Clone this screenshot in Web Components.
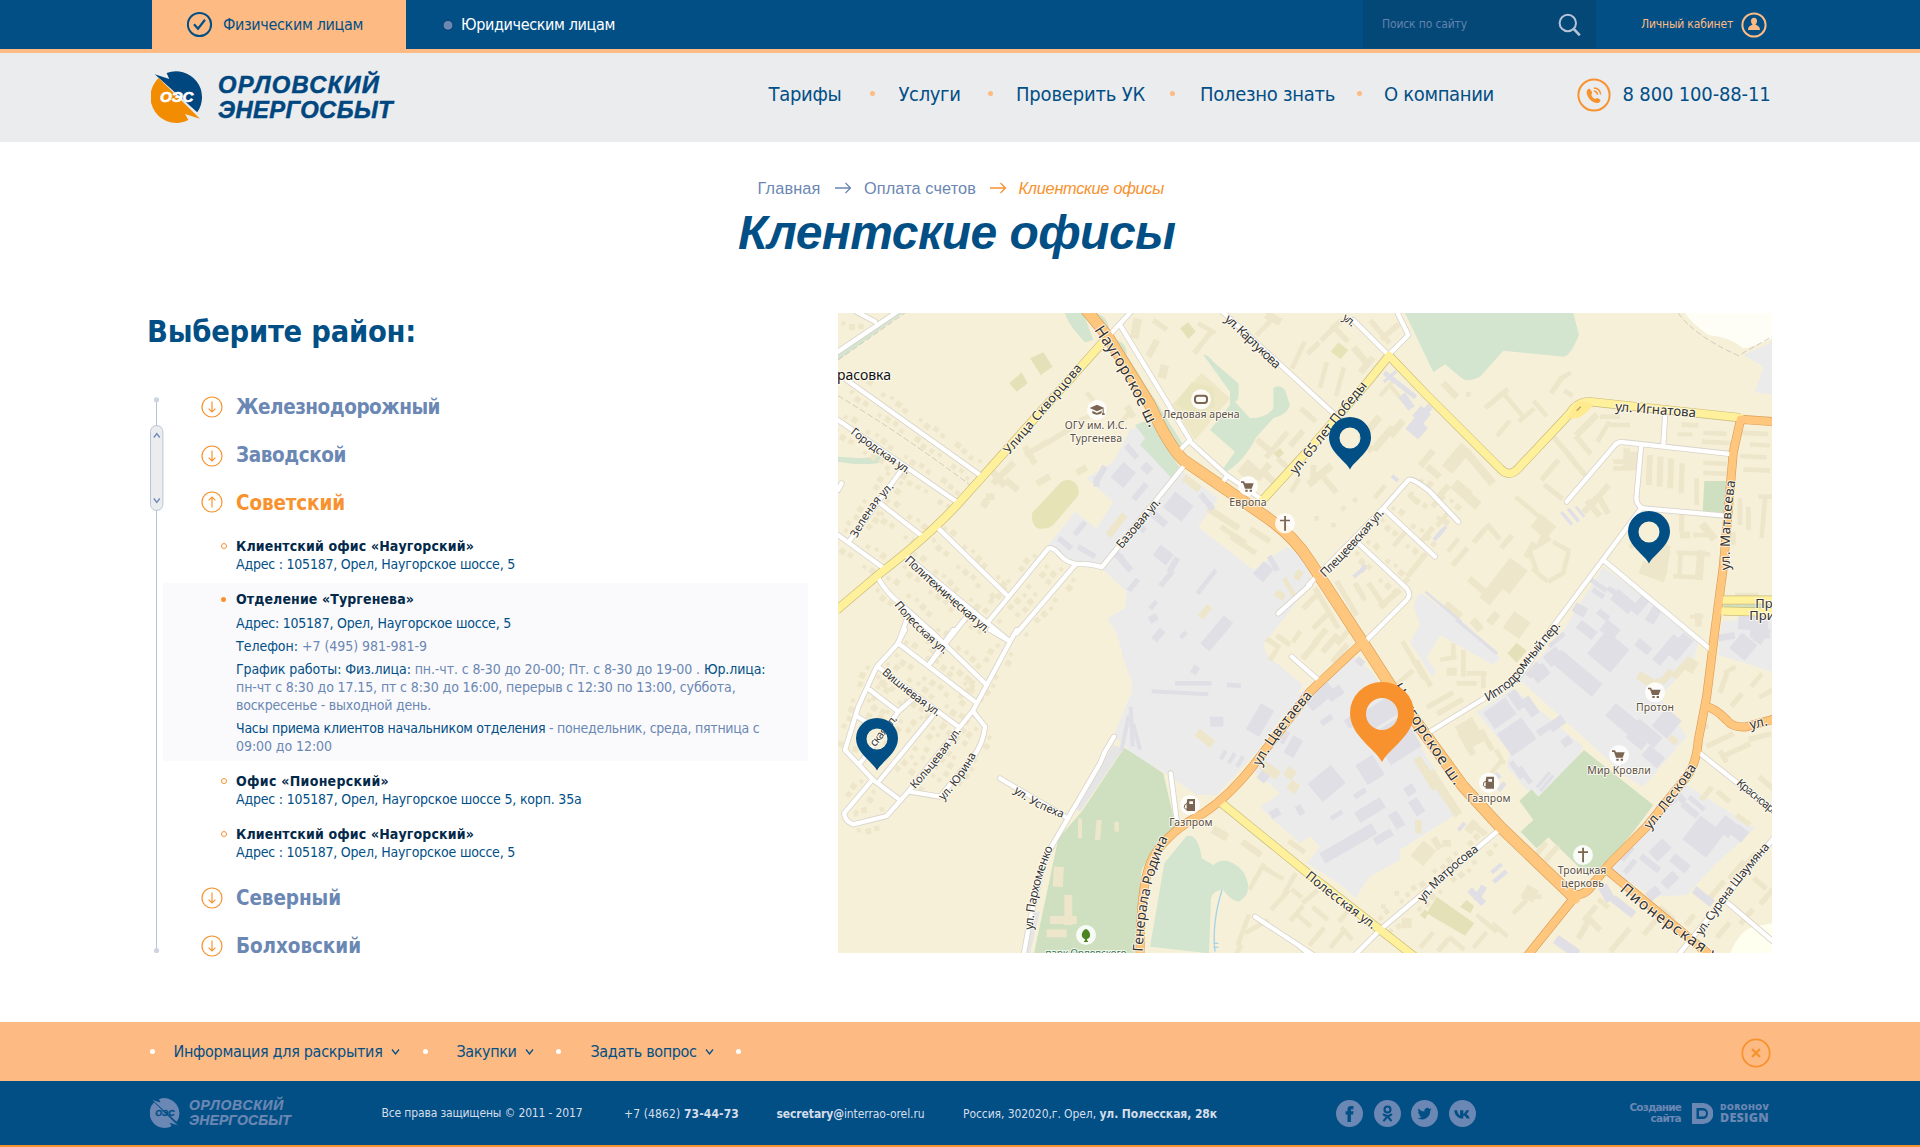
<!DOCTYPE html>
<html lang="ru">
<head>
<meta charset="utf-8">
<title>Клиентские офисы — Орловский Энергосбыт</title>
<style>
html,body{margin:0;padding:0;background:#fff}
body{font-family:"DejaVu Sans Condensed","DejaVu Sans","Noto Sans",sans-serif;font-stretch:condensed;color:#024f86}
</style>
</head>
<body>
<oes-page></oes-page>
<script>
const define=(name,html,setup)=>customElements.define(name,class extends HTMLElement{
  constructor(){super();this.attachShadow({mode:'open'});}
  connectedCallback(){
    this.shadowRoot.innerHTML=typeof html==='function'?html(this):html;
    if(setup)setup(this);
  }
});

/* Text whose tracking is adjusted so that it spans the width given in "w". */
define('fit-text',`<style>:host{display:inline-block;white-space:pre;flex:none}</style><span><slot></slot></span>`,el=>{
  const w=+el.getAttribute('w'),s=el.shadowRoot.querySelector('span');
  const n=el.textContent.length;
  el.style.width=w+'px';
  s.style.letterSpacing=((w-s.getBoundingClientRect().width)/n).toFixed(3)+'px';
});

define('oes-logo',el=>{
  const foot=el.hasAttribute('mono');
  const k=foot?.577:1,a=foot?'#6b87b3':'#00467f',b=foot?'#6b87b3':'#f28c00',t=foot?'#024f86':'#fff';
  return `<style>:host{display:flex;align-items:center;flex:none;font:italic bold ${foot?14:23.8}px/${foot?14.6:25.5}px "Liberation Sans",sans-serif;color:${a};font-stretch:normal}
  svg{flex:none;margin-right:${foot?9:15}px}.t{display:flex;flex-direction:column;-webkit-text-stroke:${foot?.2:.5}px ${a}}</style>
  <svg width="${52*k}" height="${52*k}" viewBox="0 0 52 52">
   <path fill="${a}" d="M3.7 3.3 18.3 8 15.6 2A26 26 0 0 1 46.2 41.3Z"/>
   <path fill="${b}" d="M48.9 47.7 34 43 37.4 49A26 26 0 0 1 7.6 7Z"/>
   ${foot?'<path d="M4 3.6 48 47" stroke="#024f86" stroke-width="1.6"/>':''}
   <text x="9" y="31" font-size="15.5" textLength="33.500" lengthAdjust="spacingAndGlyphs" fill="${t}" stroke="${t}" stroke-width=".7">ОЭС</text></svg>
  <div class="t"><fit-text w="${foot?95:162}">ОРЛОВСКИЙ</fit-text><fit-text w="${foot?102:175}">ЭНЕРГОСБЫТ</fit-text></div>`;
});

define('top-bar',`<style>
:host{display:flex;height:49px;background:#024f86;border-bottom:4px solid #fdbb83;line-height:49px;font-size:16px;padding-left:152px}
.tab{width:254px;height:49px;box-sizing:border-box;background:#fdbb83;display:flex;align-items:center;padding-left:34px;gap:10px}
.tab fit-text{color:#024f86}
.alt{display:flex;align-items:center;color:#fff;margin-left:36px;gap:7px}
.search{margin-left:auto;width:233px;height:48px;background:#034877;display:flex;align-items:center;box-sizing:border-box;padding-left:19px;font-size:12px;color:#6482ae;justify-content:space-between;padding-right:15px}
.cab{display:flex;align-items:center;font-size:12px;color:#fdbb83;margin-left:45px;gap:8px;margin-right:153px}
svg{flex:none;display:block}
</style>
<div class="tab"><svg width="27" height="27" viewBox="0 0 27 27" fill="none" stroke="#024f86" stroke-width="2"><circle cx="13.5" cy="13.5" r="11.6"/><path d="m8 13.2 4 4.6 7-9" stroke-width="2.2"/></svg><fit-text w="140">Физическим лицам</fit-text></div>
<div class="alt"><svg width="12" height="12"><circle cx="6" cy="6.3" r="5" fill="#6b87b3" stroke="#033c69"/></svg><fit-text w="154">Юридическим лицам</fit-text></div>
<div class="search"><fit-text w="85">Поиск по сайту</fit-text><svg width="23" height="23" viewBox="0 0 23 23" fill="none" stroke="#b4c3d6" stroke-width="2"><circle cx="9.8" cy="10" r="8.2"/><path d="m15.8 16 6 6.3" stroke-width="2.6"/></svg></div>
<div class="cab"><fit-text w="92">Личный кабинет</fit-text><svg width="26" height="26" viewBox="0 0 26 26"><circle cx="13" cy="13" r="11.6" fill="none" stroke="#fdbb83" stroke-width="2"/><path fill="#fdbb83" d="M13 5.8c2 0 3 1.5 3 3.3 0 1.400-.6 2.700-1.500 3.400.3 1 4.500.8 4.500 5.500H7c0-4.700 4.200-4.500 4.500-5.500C10.600 11.800 10 10.500 10 9.100c0-1.800 1-3.300 3-3.300z"/></svg></div>`);

define('nav-dot',`<style>:host{display:block;flex:none;width:5px;height:5px;border-radius:50%;background:var(--dot,#fdbb83)}</style>`);

define('site-header',`<style>
:host{display:flex;height:89px;background:#ebecee;box-sizing:border-box;padding-left:151px}
nav{display:flex;align-items:center;font-size:20px;line-height:30px;height:81px;margin-left:375.5px}
oes-logo{width:242px;height:88px}
.tel{display:flex;align-items:center;gap:11px;font-size:20px;height:81px;margin-left:83.5px;line-height:30px}
svg{position:relative;top:1px}
</style>
<oes-logo></oes-logo>
<nav><fit-text w="73">Тарифы</fit-text><nav-dot style="margin:0 24px 0 28px"></nav-dot><fit-text w="62">Услуги</fit-text><nav-dot style="margin:0 23.5px 0 27px"></nav-dot><fit-text w="129">Проверить УК</fit-text><nav-dot style="margin:0 25px"></nav-dot><fit-text w="135">Полезно знать</fit-text><nav-dot style="margin:0 21.7px 0 22.3px"></nav-dot><fit-text w="110">О компании</fit-text></nav>
<div class="tel"><svg width="34" height="34" viewBox="0 0 34 34"><circle cx="17" cy="17" r="15.600" fill="none" stroke="#f8922f" stroke-width="2"/>
<path fill="#f8922f" d="M10.200 12.200c1-1.600 2.600-1.800 3.400-.4l1.500 2.500c.5 1-.9 1.700-.7 2.600.5 1.800 1.900 3.200 3.600 4 .9.300 1.400-1.100 2.400-.8l2.300 1.200c1.500.9.500 2.700-1 3.400-2.600 1-6.300-.5-8.700-3.200-2.500-2.800-4.100-6.700-2.800-9.300z"/><path d="M16.800 12.900c2.200.2 3.500 1.700 3.700 3.700M16.800 9.900c3.900.2 6.600 2.700 6.900 6.600" fill="none" stroke="#f8922f" stroke-width="1.500"/></svg><fit-text w="148">8 800 100-88-11</fit-text></div>`);

define('bread-crumbs',`<style>
:host{display:flex;align-items:center;height:20px;font:16.3px/20px "Liberation Sans",sans-serif;font-stretch:normal;color:#6b87b3;padding:36px 0 0 757.5px}
.on{color:#f8922f;font-style:italic}svg{flex:none;fill:none;stroke:currentColor;stroke-width:1.3}
</style><fit-text w="63">Главная</fit-text><svg style="margin:0 12.5px 0 14px" width="17" height="12"><path d="M0 6H15.500M10.500 1l5 5-5 5"/></svg><fit-text w="112">Оплата счетов</fit-text><svg class="on" style="margin:0 11.5px 0 14px" width="17" height="12"><path d="M0 6H15.500M10.500 1l5 5-5 5"/></svg><fit-text class="on" w="145.5">Клиентские офисы</fit-text>`);

define('page-title',`<style>:host{display:block;padding:7px 0 0 738px;height:55px;font:italic bold 48px/56px "Liberation Sans",sans-serif;font-stretch:normal;color:#024f86}</style><fit-text w="437.5"><slot></slot></fit-text>`,el=>{
  const f=el.shadowRoot.querySelector('fit-text');f.textContent=el.textContent;f.connectedCallback();
});

define('scroll-rail',`<style>:host{display:block;width:13px;height:557px;margin-top:14px;flex:none}</style>
<svg width="14" height="557" viewBox="0 0 14 557" fill="none"><path d="M6.500 3V553" stroke="#b9c4d8"/><circle cx="6.500" cy="2.800" r="2.600" fill="#cdd5e3"/><circle cx="6.500" cy="553.500" r="2.600" fill="#cdd5e3"/>
<rect x=".5" y="28.500" width="12.400" height="85" rx="6.200" fill="#ebecee" stroke="#b9c6da"/><path d="m3.800 40.500 3-4 3 4M3.800 101.500l3 4 3-4" stroke="#6b87b3" stroke-width="1.300"/></svg>`);

define('district-row',el=>{
  const open=el.hasAttribute('open');
  return `<style>:host{display:flex;align-items:center;height:48px;padding-left:38px;gap:13px;font-weight:bold;font-size:20.5px;line-height:24px;color:${open?'#f8922f':'#6b87b3'}}
  svg{flex:none;position:relative;top:${el.getAttribute('dy')||0}px}fit-text{position:relative;top:-.5px}</style>
  <svg width="22" height="22" viewBox="0 0 22 22" fill="none" stroke="#f8922f" stroke-width="1.200"><circle cx="11" cy="11" r="10"/><path d="${open?'M11 16.500V6M7.600 9.400 11 6l3.400 3.400':'M11 5.500V16M7.600 12.600 11 16l3.400-3.400'}"/></svg><fit-text w="${el.getAttribute('w')}">${el.textContent}</fit-text>`;
});

define('office-item',el=>{
  const on=el.hasAttribute('active');
  return `<style>:host{display:grid;grid-template-columns:8px 1fr;column-gap:8px;padding-left:57px;font-size:14px;line-height:18px;color:#024f86;${on?'background:#fafafc;':''}}
  i{display:block;box-sizing:border-box;width:${on?5:6}px;height:${on?5:6}px;border-radius:50%;margin:${on?'7px 0 0 1px':'6px 0 0 1px'};${on?'background:#f8922f':'border:1px solid #f8922f'}}
  .t{font-weight:bold;color:#03294a}</style><i></i><div><div class="t"><slot name="title"></slot></div><slot></slot></div>`;
});

define('info-line',`<style>:host{display:flex;flex-direction:column;margin-top:5px}</style><slot></slot>`);

define('district-list',`<style>
:host{display:block;width:645px}
office-item[active]{width:645px;height:178px;box-sizing:border-box;padding-top:7px}
s{text-decoration:none;color:#6b87b3}
</style>
<district-row w="204">Железнодорожный</district-row>
<district-row w="110" dy="1">Заводской</district-row>
<district-row w="109" dy="-1" open>Советский</district-row>
<office-item style="padding-top:10px;padding-bottom:10px"><fit-text slot="title" w="238">Клиентский офис «Наугорский»</fit-text><fit-text w="279">Адрес : 105187, Орел, Наугорское шоссе, 5</fit-text></office-item>
<office-item active><fit-text slot="title" w="178">Отделение «Тургенева»</fit-text>
<info-line style="margin-top:6px"><fit-text w="275">Адрес: 105187, Орел, Наугорское шоссе, 5</fit-text></info-line>
<info-line><fit-text w="191">Телефон: <s>+7 (495) 981-981-9</s></fit-text></info-line>
<info-line><fit-text w="529.5">График работы: Физ.лица: <s>пн.-чт. с 8-30 до 20-00; Пт. с 8-30 до 19-00 .</s> Юр.лица:</fit-text><fit-text w="499.5"><s>пн-чт с 8:30 до 17.15, пт с 8:30 до 16:00, перерыв с 12:30 по 13:00, суббота,</s></fit-text><fit-text w="195"><s>воскресенье - выходной день.</s></fit-text></info-line>
<info-line><fit-text w="523.5">Часы приема клиентов начальником отделения <s>- понедельник, среда, пятница с</s></fit-text><fit-text w="96"><s>09:00 до 12:00</s></fit-text></info-line></office-item>
<office-item style="padding-top:11px"><fit-text slot="title" w="153">Офис «Пионерский»</fit-text><fit-text w="345.5">Адрес : 105187, Орел, Наугорское шоссе 5, корп. 35а</fit-text></office-item>
<office-item style="padding-top:17px;padding-bottom:13px"><fit-text slot="title" w="238">Клиентский офис «Наугорский»</fit-text><fit-text w="279">Адрес : 105187, Орел, Наугорское шоссе, 5</fit-text></office-item>
<district-row w="105">Северный</district-row>
<district-row w="125">Болховский</district-row>`);

define('map-pin',el=>`<style>:host{position:absolute;display:block;color:${el.getAttribute('color')}}svg{display:block}</style>
<svg width="${2*el.getAttribute('r')}" height="${2.5*el.getAttribute('r')}" viewBox="-62 -62 124 155" fill="currentColor"><path fill-rule="evenodd" d="M0 93C-14 66-62 42-62-2A62 60 0 0 1 62-2C62 42 14 66 0 93ZM0-31A31 31 0 1 0 0 31A31 31 0 1 0 0-31Z"/></svg>`);

/* The map is drawn in thirds of a pixel, in four sheets; each entry names its sheet's offset. */
const SHEET={a:[0,0],b:[1410,0],c:[0,975],d:[1410,975]};
const at=k=>`transform="translate(${SHEET[k]})"`;
const AREAS=[
['a','#ebebeb','M930,360 900,375 850,470 770,520 850,590 800,670 735,620 655,720 720,780 815,790 890,860 885,910 832,940 860,985 880,1060 905,1130 905,1160 852,1290 930,1370 1000,1400 1100,1470 1160,1470 1290,1330 1420,1140 1310,1050 1300,1020 1440,840 1440,770 1370,725 1270,795 1105,665 1165,580 1060,500 1030,520 960,450Z'],
['d','#ebebeb','M-20,200 165,80 210,120 240,160 350,270 350,330 480,545 300,660 300,690 210,740 165,805 130,770 70,730 20,700 60,650 30,620 0,640 -80,570 -120,530 -60,490 -140,420Z'],
['d','#ebebeb','M530,245 640,175 850,350 800,440 720,500 680,480 620,410 630,370Z'],
['d','#ebebeb','M660,150 790,0 910,-190 1200,20 1180,90 1080,200 1160,320 1030,470 980,440Z'],
['d','#ebebeb','M930,720 1160,465 1365,595 1250,700 1160,795 1060,800Z'],
['b','#ebebeb','M340,900 360,862 500,960 600,1060 580,1080 420,990 380,1060 410,1100 395,1115 330,1010 360,960Z'],
['b','#ebebeb','M1330,150 1416,110 1416,270 1365,262 1390,185Z M1265,950 1416,930 1416,1100 1255,1050Z'],
['c','#e5e5e6','M850,345 880,355 750,545 735,530Z M610,845 630,845 600,970 585,970Z'],
['b','#fffef6','M1155,24H1416V100Q1350,130 1330,130 1290,95 1225,90 1170,50 1155,24Z'],
['d','#fffff0','M1416,880V970H1290Q1320,900 1360,890Z'],
['a','#d3e5ce','M705,24H760L790,105 765,112Q715,60 705,24Z M800,24Q840,40 838,85L810,90Z'],
['a','#d3e5ce','M855,105Q890,110 890,150 L1060,420 1050,440 975,350 900,200Z M940,350Q970,345 985,390L1050,490 1025,520 960,450 930,420 945,400 915,360Z'],
['a','#d3e5ce','M1120,150Q1130,145 1150,170 L1225,235Q1230,290 1215,290L1260,340Q1310,340 1330,310V250Q1350,235 1365,255L1380,300Q1370,330 1330,340L1280,395Q1240,470 1190,500L1180,490 1215,440 1140,375 1200,300V260Z'],
['a','#d3e5ce','M24,140V165L220,24H190Z M24,455 100,460 150,450 160,470Q110,485 24,470Z'],
['b','#d3e5ce','M315,24H820L837,90Q810,155 790,155L610,137 540,215Q500,235 480,215L435,178 400,202Z'],
['b','#cee0c0','M1213,528H1283L1275,628 1208,620Z M1270,898H1416V915H1270Z'],
['c','#cee0c0','M883,353 1000,430 1030,560 1040,590 975,650 935,720 912,970H612L685,625 755,545Z'],
['c','#d3e5ce','M1070,618Q1105,610 1115,685L1150,705Q1190,670 1240,725 1275,790 1225,815 1200,810 1180,780 1150,780 1143,805L1137,970 960,950 1003,700Z'],
['d','#cee0c0','M852,360 1060,525 1000,605 900,725 840,715 745,622 710,655 662,605 700,570 658,512 695,478 715,500Z'],
['a','#e6e4b7','M690,535Q705,520 728,528 750,540 746,570L670,660Q645,678 620,668 600,650 608,622Z'],
['a','#e4e1b8','M600,160 640,142 668,185 632,210Z M538,235 575,202 593,235 560,260Z M1050,70 1075,52 1097,80 1075,102Z M1330,445 1350,430 1362,445 1345,460Z'],
['a','#efe8c6','M1025,300 1115,203 1200,280 1095,405Z'],
['a','#e9e5bf','M1035,300 1085,232 1150,248 1155,305 1100,325Z'],
['b','#e6e4b7','M92,140 115,112 145,135 122,163Z'],
['d','#e4e1b8','M380,850 410,800 523,880 495,917Z M622,70 650,38 680,62 650,98Z M360,855 375,838 385,850 375,868Z M480,830 500,810 522,828 512,850Z'],
];
/* sheet, colour, then cx,cy,w,h,angle groups */
const T='#eee6ca',G='#e0dfe5';
const BLOCKS=[
['a',T,'918,70,26,60,10 968,130,20,56,28 990,60,50,16,35 1000,200,26,40,15 1120,110,90,16,-52 1130,70,60,14,30 1330,40,50,24,30 1300,70,60,14,-45 1405,150,14,90,25 780,275,34,14,50 690,390,100,16,-32 620,430,80,18,-30 600,450,60,18,60 790,330,90,14,-20 880,345,60,14,-50 900,320,40,20,60 520,505,90,20,-45 505,520,20,60,-40 545,540,20,50,-50 640,525,45,20,-30 755,495,34,20,-30 480,575,26,20,0 465,595,22,26,30 1260,500,60,50,40 1300,500,60,20,-50 1320,520,40,20,45 1340,420,100,16,-50 1400,400,60,18,-50 1300,420,50,18,40 1365,480,60,16,40 1395,540,14,50,30 1180,640,110,20,33 1210,690,90,16,33 1240,720,90,16,33 1290,690,70,18,33 1085,535,60,22,38 1350,870,30,22,30 1380,850,14,70,-30 1125,920,44,20,-50 860,660,80,22,-52 1405,810,20,30,30'],
['a',G,'880,510,60,50,-50 905,440,50,18,50 930,560,60,18,-50 950,490,26,30,-45 810,510,60,18,-60 800,530,18,30,0 1045,605,70,60,38 985,640,60,22,40 930,665,40,18,40 1130,590,60,18,50 1000,750,50,40,38 1030,780,18,50,30 880,770,70,20,50 860,750,40,20,30 705,715,50,18,40 770,740,60,16,30 750,670,50,16,-50 910,840,44,16,-50 1010,820,60,16,-50 970,900,30,14,-50 1130,830,90,14,-52 970,940,26,22,-30 1060,990,24,14,-50 985,990,40,22,-50 1160,985,110,36,-50 1300,800,50,40,-50 1330,775,16,50,-30'],
['c',G,'1095,120,20,26,30 1090,160,110,14,0 1050,188,170,12,3 1212,166,42,14,3 1160,275,40,30,0 1290,270,46,90,30 1360,320,24,40,30 1390,350,34,60,30 1180,375,12,30,30 1205,385,12,36,30 1230,395,12,36,30 885,310,12,110,12 905,290,12,120,-3 920,320,12,80,-15 1335,550,30,24,-30 1300,440,30,30,-50'],
['c',T,'1360,30,50,16,35 1330,40,50,16,35 1330,75,14,40,35 1400,20,14,40,35 1320,420,60,30,35 1380,430,30,30,35 1390,470,30,30,35 1125,325,60,26,38 1170,610,50,26,30 1265,655,70,20,35 1400,650,60,16,35 1280,740,14,90,30 1330,730,70,14,30 1350,810,80,14,-48 1400,850,60,14,-50 1240,900,14,100,20 1280,890,14,80,60 1380,760,14,70,30 1220,970,14,60,30 1400,790,40,14,40 685,740,30,60,3 805,600,16,60,5 750,595,12,60,0 715,840,24,90,0 700,870,80,24,0 680,910,60,24,0 860,590,14,30,0'],
['b',T,'95,75,90,16,-45 120,85,70,16,45 40,130,50,16,-45 70,210,14,80,15 120,230,14,90,15 180,150,60,20,50 200,180,20,60,40 240,80,90,16,50 270,80,70,16,-40 260,250,60,12,-50 290,265,70,12,50 25,330,60,16,40 60,510,90,22,-40 90,540,60,18,50 40,500,18,40,0 210,370,90,22,-50 250,400,90,22,-50 290,370,60,22,-50 200,420,50,20,50 400,500,50,20,40 380,460,60,20,-50 470,460,90,40,-50 540,490,120,24,50 430,560,50,18,-50 485,555,60,34,40 520,590,40,30,40 450,255,60,20,45 505,268,14,14,0 590,280,90,16,-40 640,300,110,14,50 610,370,60,14,-50 680,330,60,14,-40 720,310,60,14,50 770,240,60,16,-55 800,210,30,14,-30 805,265,30,14,30 860,360,90,20,-45 910,380,70,14,-60 750,495,80,16,-50 790,430,90,16,50 830,480,80,16,50 850,420,70,16,50 760,560,70,16,38 960,360,60,14,0 930,335,60,14,0 1000,300,40,14,0 980,460,20,60,0 960,470,40,14,0 1000,465,30,50,0 975,490,70,14,0 1048,495,18,90,2 1080,500,18,90,2 1112,505,18,90,2 1145,520,16,90,2 1190,560,14,80,0 1245,385,70,14,3 1250,412,90,14,3 1170,360,50,14,3 1155,388,44,12,0 1360,385,90,14,3 1380,420,60,14,3 1360,455,80,14,3 1370,495,80,14,3 1245,505,70,14,3 1245,475,70,14,3 1225,440,60,14,3 900,570,80,18,-50 870,600,60,18,-50 910,600,18,60,-30 880,610,60,18,50 700,620,140,14,40 730,665,60,50,40 735,690,20,60,30 690,735,18,50,30 725,715,60,14,-30 785,725,60,14,30 798,770,14,60,15 770,815,60,14,-30 720,810,60,14,40 700,770,14,60,-20 600,830,150,40,-52 640,820,90,40,-52 570,860,60,20,-50 530,840,60,20,40 540,690,60,16,-50 580,680,60,16,50 620,710,50,16,-50 480,755,70,16,-50 460,720,50,14,-50 1000,720,26,16,-40 1075,770,60,80,10 1060,800,80,40,20 1090,740,26,50,30 1145,650,16,60,0 1155,690,30,20,0 1225,680,24,60,-40 1210,690,60,14,0 1180,745,100,14,3 1140,780,14,80,3 1200,780,24,90,5 1160,815,80,14,3 1320,620,14,80,0 1345,640,14,70,0 1390,640,14,120,5 1400,575,50,14,0 1300,700,14,40,0 1340,870,70,14,0 1195,945,20,40,0 1190,935,40,12,0 50,640,14,14,0 100,660,14,14,0 130,610,14,14,45 165,585,14,14,45 80,910,16,140,-30 140,880,16,120,-30 180,860,16,60,-30 230,870,16,90,-35 270,880,18,80,50 30,890,60,16,-45 60,950,60,16,-45 350,780,16,90,40 380,690,16,60,40 300,700,14,60,40 430,640,14,60,40 410,590,16,40,40 340,580,16,40,-50 240,560,14,50,40 650,960,60,60,35 580,940,40,24,-50 530,960,40,24,50 460,915,60,20,40'],
['b',G,'270,215,50,10,-40 300,240,120,14,38 320,290,24,50,-35 350,370,50,46,40 365,330,40,40,40 385,310,20,20,40 285,520,24,12,40 800,640,50,10,50 820,630,50,10,50 840,620,40,8,50 415,690,40,12,-50 425,680,40,12,-50 180,800,50,12,-40 190,790,14,26,30 430,905,140,8,40 840,915,40,30,30 895,840,60,14,35 895,865,40,16,35 940,860,40,16,35 970,890,70,40,40 910,930,40,20,40 1020,900,30,60,40 860,975,60,30,38 930,975,50,40,38 1060,930,30,50,30 1360,950,90,50,3 1380,985,60,30,3'],
['d',T,'30,60,70,18,-50 90,40,70,18,-50 120,70,70,18,-50 60,20,60,18,-50 130,20,60,16,-50 340,90,14,130,-30 370,130,16,90,-30 305,150,90,14,-40 445,85,50,14,-10 460,60,14,40,0 455,125,30,24,0 490,100,14,80,0 500,160,60,14,0 530,130,60,14,0 550,150,14,50,0 420,210,90,16,-30 450,230,90,16,-30 510,310,60,80,-30 500,340,20,80,-30 560,330,16,70,-30 600,380,14,50,-30 590,410,50,14,-50 380,430,26,110,-32 420,470,26,110,-32 460,530,26,60,-32 355,590,20,40,0 370,670,50,60,40 410,640,40,20,60 440,640,26,20,0 515,590,40,26,-50 540,600,18,40,-50 440,720,16,40,45 720,660,60,16,-50 755,670,60,16,-50 690,790,40,40,30 695,800,60,14,0 660,830,14,60,45 560,880,14,80,-50 600,900,60,14,40 540,930,60,14,-50 470,940,60,14,40 870,850,60,16,-50 880,880,60,18,45 850,900,18,60,30 910,820,40,16,40 960,930,90,16,-50 1060,880,90,16,-50 1100,850,16,60,-50 1170,870,40,16,-50 1250,780,70,16,-50 1310,720,70,16,-50 1350,690,60,16,-50 1400,800,60,16,-50 1340,860,60,16,-50 1270,900,60,16,-50 1240,850,16,50,40 1380,760,16,50,-50 1100,140,50,20,-50 1140,120,60,20,-50 1170,105,40,40,30 1060,170,60,16,-50 1040,150,60,26,30 1120,330,30,20,40 1270,160,16,60,20 1310,210,50,16,-50 1290,120,40,14,-30 1370,150,50,14,-50 1400,190,50,14,-30 1260,330,90,16,-25 1310,360,90,16,-25 1380,320,70,16,-15 1270,380,16,40,-30 1220,490,50,16,-50 1270,500,16,50,-50 1330,570,50,16,35 1400,460,16,60,-50 1210,290,30,16,-10 30,800,14,60,50 60,850,60,14,40 110,930,60,14,-50 50,920,70,14,-50 130,860,40,14,-50 10,870,60,14,40 250,830,14,14,0 290,790,14,14,0 320,880,30,30,0 380,930,60,14,-50 430,945,16,50,40 140,910,14,50,-40'],
['d',G,'180,95,26,20,40 60,200,90,40,-40 105,190,50,30,-35 160,270,50,30,-35 80,270,40,18,-35 240,250,120,60,-32 290,330,110,110,-32 210,420,60,70,-32 80,460,90,70,-40 180,490,40,16,-32 210,540,90,36,-32 290,570,30,50,-32 350,530,30,50,-32 110,555,40,14,-32 145,640,180,36,-30 250,620,60,24,-30 330,480,30,30,-32 0,540,20,30,-30 600,250,80,60,-35 650,320,90,80,-35 650,210,30,60,-35 690,230,30,60,-35 730,300,40,20,-35 770,280,50,30,-35 800,335,30,26,-35 650,420,16,60,-35 675,435,16,60,-35 730,450,60,10,-50 740,460,60,10,-50 720,130,50,40,-40 760,80,50,40,-40 830,130,160,50,40 925,65,90,90,40 1100,60,100,30,-50 1140,50,80,40,-50 1030,50,50,26,40 970,270,100,50,40 1040,310,90,40,40 1100,280,60,70,40 1010,330,60,30,40 1060,380,60,40,40 700,120,50,20,-50 770,30,60,14,-40 1100,520,60,30,-40 1140,500,20,40,-40 1170,540,60,20,40 1190,520,60,14,40 1210,620,90,90,38 1140,700,60,30,38 1080,660,60,40,-45 1050,700,70,20,38 1110,750,50,30,-45 1280,590,50,50,38 1320,610,40,40,38 980,670,50,20,-50 990,710,50,16,-50 970,830,80,24,38 1210,800,70,24,38 920,790,30,50,-30 1060,790,40,30,-40 800,950,80,30,35 600,740,14,50,50 590,715,40,12,-40 530,800,60,20,45 540,790,20,50,30 485,590,30,12,-50 1330,50,60,60,40 1380,20,30,40,30 1280,20,50,20,-10 580,450,50,20,-45 605,470,30,14,-50 530,20,160,10,40'],
];
const ROADS=[
['w','a','M24,140 205,18 M75,18 135,50 M50,225 450,510 M24,345 380,590 M215,495 60,705 M150,595 275,692 M24,690 155,785 M320,665 535,875 M145,820Q170,865 210,895L310,985 M225,750 540,1010 M655,730 475,950 M410,935 300,1075 M735,780 560,985 M655,730Q670,725 690,750 715,780 760,777 800,780 815,787L1060,485 M235,930 205,1015 M820,110 905,18 M870,60 1080,405 1050,435 M1080,410 1190,510 1290,580 M1190,515 1175,535 M1175,18 1510,325 M1345,925 1440,840 M24,555 35,535'],
['w','b','M25,840 250,610 325,525Q335,515 390,560L475,650 M250,610 405,755 M170,710 320,850Q335,870 320,885L195,1010 M160,45 265,150 325,90 290,18 M1095,335 1090,420 M800,590 945,420Q955,408 975,412L1300,448 M1023,425 1010,570Q1005,600 1030,610L1275,632 M1020,615 740,990Q670,1110 640,1130L545,1185 390,1280 M910,765 1230,1032'],
['w','c','M225,0 200,45 140,110 85,230 45,360 130,450 210,510 M560,0 540,35 430,240 235,485 170,558 70,583Q45,575 42,550L125,452 M540,35 480,0 M205,40 435,215 M120,180 205,245 250,205 M205,245 90,400 M150,115 385,290 M310,255 150,450 M80,258 130,290 M430,245 465,290Q460,340 430,380L330,500 240,485 M370,0 300,100 M300,0 465,160 M510,445 705,560 M852,320 825,365 810,400 670,640 640,700 600,870 582,970 M1022,430 1040,570 M1385,80 1465,150 M1275,860 1450,975'],
['w','d','M1200,370 1420,545 M600,597 245,895 165,975 M1420,625 1180,920 1130,980 M1285,820 1420,935 M0,950 35,978 M200,30 230,0'],
['y','a','M20,915 150,805Q300,690 390,590L480,490 820,110 M1280,605 1440,430 1610,235 1677,152 1790,270 2010,490Q2038,520 2065,490L2220,325Q2240,290 2280,290L2730,338'],
['y','b','M1270,885 1420,885 M1270,918 1420,922'],
['y','c','M1175,520 1440,735 1760,985'],
['y','b','M815,322 845,300'],
['o','a','M765,10 830,90 960,300Q1015,420 1060,465L1300,630Q1390,690 1440,770L1600,1015 1700,1170 1900,1445 2010,1565 2235,1780'],
['n','d','M825,795Q860,795 880,760L930,700 1040,590 1160,440Q1190,400 1195,330L1220,200 1245,0 1270,-190 1300,-535 1322,-632 1420,-625 M915,715 1235,980 M825,800 680,980 M190,35 30,185 -120,380Q-200,490 -290,550 -390,600 -440,680 -480,750 -480,980 M1220,230Q1245,235 1280,270 1300,295 1340,290L1420,268'],
];
const STY={w:[18,'#d8d4ca',13,'#fff'],y:[27,'#c6ba78',23,'#fff09c'],n:[27,'#dc9f58',23,'#ffc77d'],o:[36,'#dc9f58',32,'#ffc77d']};
/* sheet, size, text, baseline */
const STREETS=[
['a',46,'Наугорское ш.','M792,75Q870,190 905,260L960,372'],
['a',38,'ул. Картукова','M1182,45 1340,195'],
['a',38,'Улица Скворцова','M538,450 760,188'],
['a',34,'Городская ул.','M60,385Q130,440 235,510'],
['a',34,'Зеленая ул.','M80,700Q130,600 195,545'],
['a',36,'Политехническая ул.','M222,768Q330,870 470,988'],
['a',34,'Полесская ул.','M192,900Q250,975 345,1050'],
['a',36,'Базовая ул.','M875,733 995,590'],
['a',40,'ул. 65 лет Победы','M1398,510 1615,240'],
['b',34,'ул.','M125,42 158,68'],
['b',40,'ул. Игнатова','M945,318 1190,337'],
['b',40,'ул. Матвеева','M1290,795Q1285,660 1307,525'],
['b',36,'Плещеевская ул.','M75,818Q160,735 255,622'],
['b',38,'Ипподромный пер.','M562,1190Q650,1145 680,1085L785,960'],
['c',34,'Вишневая ул.','M155,130Q215,185 325,262'],
['c',34,'Кольцевая ул.','M255,478Q340,385 395,300'],
['c',34,'ул. Юрина','M340,512Q400,450 440,372'],
['c',34,'ул. Успеха','M550,485Q600,530 700,565'],
['c',34,'ская ул.','M135,352 205,265'],
['c',36,'ул. Пархоменко','M608,900Q615,780 670,650'],
['c',42,'Генерала Родина','M938,965Q945,770 1015,622'],
['c',42,'ул. Цветаева','M1292,410Q1330,330 1450,195'],
['d',46,'Наугорское ш.','M276,170Q360,320 466,470'],
['d',38,'Полесская ул.','M14,742Q110,820 220,900'],
['d',36,'ул. Матросова','M370,818Q430,740 540,660'],
['d',40,'ул. Лескова','M1050,600Q1110,530 1192,410'],
['d',46,'Пионерская ул.','M958,782Q1070,880 1285,1020'],
['d',36,'ул. Сурена Шаумяна','M1205,918Q1310,760 1412,650'],
['d',34,'Красноармейская','M1308,462Q1360,510 1510,622'],
['d',40,'ул.','M1352,298 1408,285'],
];
const POI=[
['a',801,315,'cap',[['ОГУ им. И.С.',798,373,188],['Тургенева',798,410,156]]],
['a',1113,283,'rink',[['Ледовая арена',1114,340,230]]],
['a',1254,543,'cart',[['Европа',1254,602,112]]],
['a',1365,655,'cross',[]],
['c',1080,525,'gas',[['Газпром',1083,587,130]]],
['c',768,915,'tree',[]],
['d',567,458,'gas',[['Газпром',567,517,130]]],
['d',849,675,'cross',[['Троицкая',846,732,146],['церковь',848,770,128]]],
['d',957,375,'cart',[['Мир Кровли',957,433,190]]],
['d',1065,187,'cart',[['Протон',1065,244,114]]],
];
const GLYPH={
cap:'<path d="M-22-6 0-16 22-6 0 4ZM-14 2-14 10Q0 18 14 10V2L0 9ZM17-4H20V10H23V15H15V10H17Z"/>',
rink:'<rect x="-18" y="-11" width="36" height="22" rx="8" fill="none" stroke="#7b6653" stroke-width="6"/>',
cart:'<path d="M-21-14H-12L-9-8H17L11 8H-9L-15-9H-21ZM-8 11H-1V17H-8ZM5 11H12V17H5Z"/>',
cross:'<path d="M-2.500-22H3V-11H15V-6H3V22H-2.500V-6H-15V-11H-2.500Z"/>',
gas:'<path fill-rule="evenodd" d="M-8-18H15V18H-10V-6ZM-2-11V-3H9V-11Z"/><path d="M-9-4Q-18-4-17 8 -14 15-8 12" fill="none" stroke="#7b6653" stroke-width="3"/>',
tree:'<path fill="#4a8522" d="M0-18C10-14 14-4 12 4 9 12 3 12 3 12V17H6V21H-6V17H-3V12S-9 12-12 4C-14-4-10-14 0-18Z"/>'};
/* Rows of small houses on both sides of a lane: x1,y1,x2,y2 */
const LANES=[['a',70,235,440,500],['a',24,350,370,585],['a',24,690,150,780],['a',150,600,270,690],['a',320,680,520,870],['a',230,760,480,970],['a',150,830,310,970],['a',200,510,70,690],['a',640,760,480,940],['a',720,800,560,980],['a',30,30,130,40],
['c',205,50,425,210],['c',300,10,460,155],['c',150,115,385,290],['c',120,185,205,245],['c',300,270,150,440],['c',200,250,110,380],['c',140,110,50,360],['c',530,50,250,470],['c',70,580,170,560],['c',120,460,45,550],['c',465,300,340,490],['b',255,620,400,750],['b',340,540,470,640],['b',180,720,310,850],['d',580,620,250,890]];
const houses=LANES.map(([k,x1,y1,x2,y2])=>{
  const L=Math.hypot(x2-x1,y2-y1),ux=(x2-x1)/L,uy=(y2-y1)/L,a=Math.atan2(uy,ux)*57.3;let s='';
  for(let i=12,j=0;i<L;i+=27,j++)for(const e of[-1,1]){
    if((j*7+(e>0?3:0))%5==4)continue;
    const o=e*(24+(j*5%3)*4),z=12+(j*11%4)*2;
    s+=`<rect x="${-z/2}" y="${-z/2}" width="${z}" height="${z}" transform="translate(${(x1+ux*i-uy*o).toFixed()},${(y1+uy*i+ux*o).toFixed()}) rotate(${a.toFixed()})"/>`;
  }
  return `<g ${at(k)}>${s}</g>`;
}).join('');
const line=(s,w,c,casing)=>`<path ${at(s[1])} d="${s[2]}" stroke="${c}" stroke-width="${w}" stroke-linecap="${casing?'butt':'round'}"/>`;

define('city-map',()=>`<style>
:host{display:block;position:relative;width:934px;height:640px;overflow:hidden;background:#f7f0d9;flex:none}
svg.m{display:block;font-family:"Noto Sans",sans-serif;font-stretch:normal}
text{paint-order:stroke;stroke:#fffdf4;stroke-width:6px;stroke-linejoin:round;stroke-opacity:.85}
</style>
<svg class="m" width="934" height="640" viewBox="24 24 2802 1920">
${AREAS.map(a=>`<path ${at(a[0])} fill="${a[1]}" d="${a[2]}"/>`).join('')}
${BLOCKS.map(b=>`<g ${at(b[0])} fill="${b[1]}">${b[2].split(' ').map(r=>{const[x,y,w,h,t]=r.split(',');return`<rect x="${-w/2}" y="${-h/2}" width="${w}" height="${h}" transform="translate(${x},${y}) rotate(${t})"/>`}).join('')}</g>`).join('')}
<g fill="#eee6ca">${houses}</g>
<g fill="none" stroke="#bdb6ae" stroke-width="2" stroke-dasharray="18 8"><path d="M24,272Q220,390 420,540M24,165 225,24M2545,24Q2590,90 2725,152L2826,95"/></g>
<path ${at('c')} d="M1176,780Q1145,880 1155,965M1150,940H1165M1150,952H1165" fill="none" stroke="#a5d3e8" stroke-width="4"/>
<g fill="none" stroke-linejoin="round">
${['w','y','n','o'].map(t=>ROADS.filter(r=>r[0]===t).map(r=>line(r,STY[t][0],STY[t][1],t!=='w')).join('')).join('')}
${['w','y','n','o'].map(t=>ROADS.filter(r=>r[0]===t).map(r=>line(r,STY[t][2],STY[t][3])).join('')).join('')}
</g>
<path ${at('b')} d="M800,340 830,292Q850,282 880,300 850,336 830,340Z" fill="#ffea8e"/><path ${at('b')} d="M830,317 842,305" stroke="#b5a45c" stroke-width="4"/>
${POI.map(([k,x,y,g])=>`<g ${at(k)}><g transform="translate(${x},${y})"><circle r="30" fill="#fff" fill-opacity=".85"/><g fill="#7b6653">${GLYPH[g]}</g></g></g>`).join('')}
<g fill="#333">${STREETS.map((s,i)=>`<g ${at(s[0])}><path id="s${i}" d="${s[3]}" fill="none"/><text class="st" font-size="${s[1]}"><textPath href="#s${i}">${s[2]}</textPath></text></g>`).join('')}</g>
<g fill="#5c5148" font-size="31.500" text-anchor="middle">${POI.map(([k,,,,t])=>`<g ${at(k)}>${t.map(([s,x,y,w])=>`<text x="${x}" y="${y}" textLength="${w}">${s}</text>`).join('')}</g>`).join('')}</g>
<g fill="#111" font-size="42"><text x="21" y="226" textLength="162">расовка</text></g>
<g fill="#333" font-size="39" ${at('b')}><text x="1366" y="908">Пр</text><text x="1348" y="945">При</text></g>
<text ${at('c')} x="768" y="982" text-anchor="middle" font-size="31" textLength="244" fill="#3c7660">парк Орловского</text>
</svg>
<map-pin r="21" color="#024f86" style="left:491px;top:104px"></map-pin>
<map-pin r="21" color="#024f86" style="left:790px;top:198px"></map-pin>
<map-pin r="21" color="#024f86" style="left:18px;top:405px"></map-pin>
<map-pin r="32" color="#f8922f" style="left:512px;top:369px"></map-pin>`,el=>{
  el.shadowRoot.querySelectorAll('text.st').forEach(t=>{
    const l=t.previousElementSibling.getTotalLength()-3;
    t.setAttribute('textLength',l);t.firstChild.setAttribute('textLength',l);
  });
});

define('office-finder',`<style>
:host{display:flex;justify-content:space-between;padding:53px 148px 0 147px}
h2{margin:0;font-size:30.500px;line-height:37px;height:36px;font-weight:bold;color:#024f86}
.l{display:flex;margin:34px 0 0 3px}
</style>
<section><h2><fit-text w="269">Выберите район:</fit-text></h2><div class="l"><scroll-rail></scroll-rail><district-list></district-list></div></section><city-map></city-map>`);

define('menu-link',`<style>:host{display:flex;align-items:center;gap:8px;flex:none}svg{fill:none;stroke:#024f86;stroke-width:1.300}</style><slot></slot><svg width="10" height="8"><path d="m1 1.500 3.500 4.500L8 1.500"/></svg>`);

define('site-footer',`<style>
:host{display:block;margin-top:auto}
.a{--dot:#fff;height:59px;background:#fdbb83;display:flex;align-items:center;font-size:16px;line-height:20px;color:#024f86;padding:0 149px 0 149.500px}
.close{margin-left:auto;position:relative;top:1px}
.b{height:64px;border-bottom:2px solid #f8922f;background:#024f86;display:flex;align-items:center;padding:0 151px 0 150px;font-size:12px;line-height:16px;color:#d6deea}
.b>*{flex:none}
.soc{display:flex;gap:10.500px;margin-left:119px}
.soc svg{display:block}
.by{margin-left:auto;display:flex;align-items:center;color:#6b87b3;font-weight:bold;font-family:"DejaVu Sans",sans-serif;font-stretch:normal}
.by div{display:flex;flex-direction:column;align-items:flex-end}
</style>
<div class="a"><nav-dot></nav-dot><menu-link style="margin:0 22px 0 19px"><fit-text w="209">Информация для раскрытия</fit-text></menu-link><nav-dot></nav-dot><menu-link style="margin:0 21px 0 29px"><fit-text w="60">Закупки</fit-text></menu-link><nav-dot></nav-dot><menu-link style="margin:0 21px 0 30px"><fit-text w="106">Задать вопрос</fit-text></menu-link><nav-dot></nav-dot>
<svg class="close" width="30" height="30" viewBox="0 0 30 30" fill="none" stroke="#f8922f"><circle cx="15" cy="15" r="13.700" stroke-width="1.800"/><path d="m11 11 8 8M19 11l-8 8" stroke-width="2.400"/></svg></div>
<div class="b"><oes-logo mono style="width:231.500px"></oes-logo><fit-text w="201">Все права защищены © 2011 - 2017</fit-text><fit-text w="115" style="margin-left:41.500px;padding-top:1px">+7 (4862) <b>73-44-73</b></fit-text><fit-text w="148" style="margin-left:37.500px;padding-top:1px"><b>secretary@</b>interrao-orel.ru</fit-text><fit-text w="254" style="margin-left:38.500px;padding-top:1px">Россия, 302020,г. Орел, <b>ул. Полесская, 28к</b></fit-text>
<div class="soc">
<svg width="27" height="27" viewBox="0 0 27 27"><circle cx="13.500" cy="13.500" r="13.500" fill="#6b87b3"/><path fill="#024f86" d="M11.500 22V14.500H9.600V11.300h1.900V9.400C11.500 7.200 12.700 6 15 6h2.400v3.200h-1.500c-.8 0-1 .3-1 1v1.100h2.600l-.4 3.200h-2.200V22z"/></svg>
<svg width="27" height="27" viewBox="0 0 27 27"><circle cx="13.500" cy="13.500" r="13.500" fill="#6b87b3"/><g fill="none" stroke="#024f86" stroke-width="2.100" stroke-linecap="round"><circle cx="13.500" cy="9.500" r="3"/><path d="M9.700 14.700q3.800 2.600 7.600 0M13.500 16.400 10 20.500M13.500 16.400l3.500 4.100"/></g></svg>
<svg width="27" height="27" viewBox="0 0 27 27"><circle cx="13.500" cy="13.500" r="13.500" fill="#6b87b3"/><path fill="#024f86" d="M20.600 9.200c-.5.3-1 .4-1.600.5.600-.4 1-.9 1.200-1.500-.5.300-1.100.5-1.800.7a2.900 2.900 0 0 0-5 2.600c-2.400-.1-4.500-1.200-5.900-3-.8 1.300-.4 3 .9 3.800-.5 0-.9-.1-1.300-.3 0 1.400 1 2.500 2.300 2.800-.4.100-.8.100-1.300 0 .4 1.200 1.400 2 2.700 2a5.800 5.800 0 0 1-4.200 1.200 8.200 8.200 0 0 0 12.600-7.300c.6-.4 1-.9 1.400-1.500z"/></svg>
<svg width="27" height="27" viewBox="0 0 27 27"><circle cx="13.500" cy="13.500" r="13.500" fill="#6b87b3"/><path fill="#024f86" d="M13.800 18.600c-5 0-7.900-3.300-8.600-8.400h2.900c.4 2.700 1.500 4.500 3 5.300V10.200h3.200v3.500c1.200-.5 2.300-1.900 2.800-3.500h2.900c-.4 1.700-1.500 3-2.700 3.800 1.400.7 2.700 2 3.500 4.600h-3.200c-.6-1.600-1.700-2.700-3.300-3v3z"/></svg></div>
<div class="by"><div style="font-size:10.500px;line-height:11.500px"><fit-text w="51.5">Создание</fit-text><fit-text w="30.5">сайта</fit-text></div>
<svg style="margin:0 7px 0 11px" width="21" height="21" viewBox="0 0 21 21"><path fill="#6b87b3" fill-rule="evenodd" d="M0 0H11A10.400 10.500 0 0 1 11 21H0ZM4.500 5V16H11A5 5.500 0 0 0 11 5ZM7 7.500H11A3 3 0 0 1 11 13.500H7Z"/></svg>
<div style="align-items:flex-start;font-family:'Open Sans',sans-serif;font-weight:800"><fit-text w="49" style="font-size:9px;line-height:9px">DOROHOV</fit-text><fit-text w="49" style="font-size:12.500px;line-height:13px">DESIGN</fit-text></div></div>
</div>`);

define('oes-page',`<style>:host{display:flex;flex-direction:column;width:1920px;height:1147px;overflow:hidden}
main{height:0}</style>
<top-bar></top-bar><site-header></site-header><main><bread-crumbs></bread-crumbs><page-title>Клентские офисы</page-title><office-finder></office-finder></main><site-footer></site-footer>`);
</script>
</body>
</html>
